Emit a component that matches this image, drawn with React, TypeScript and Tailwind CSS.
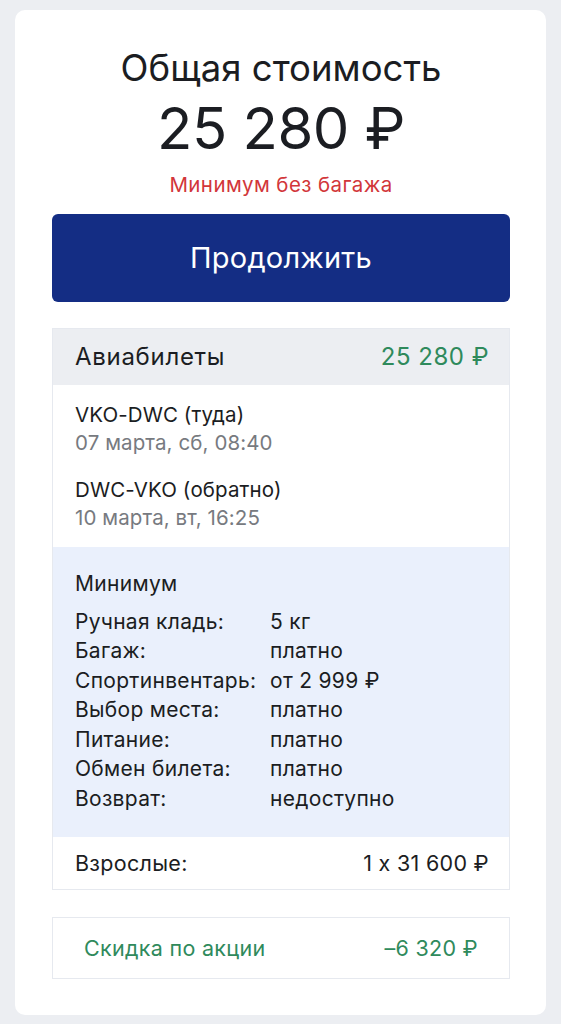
export default function App() {
  const fareRows: [string, string][] = [
    ["Ручная кладь:", "5 кг"],
    ["Багаж:", "платно"],
    ["Спортинвентарь:", "от 2 999 ₽"],
    ["Выбор места:", "платно"],
    ["Питание:", "платно"],
    ["Обмен билета:", "платно"],
    ["Возврат:", "недоступно"],
  ];

  return (
    <div className="min-h-screen bg-[#eceef2] px-[15px] pt-[10px] pb-[10px] font-['Inter',sans-serif] text-[#1b1d22]">
      <div className="rounded-[10px] bg-white pl-[37px] pr-[36px] pt-[35px] pb-[36px]">
        <div className="flex flex-col items-center">
          <h1 className="text-[36.5px] leading-[46px] font-normal">Общая стоимость</h1>
          <p className="mt-[4px] text-[58px] leading-[66px] font-normal tracking-[-0.5px]">25 280 ₽</p>
          <p className="mt-[12px] text-[20.5px] leading-[24px] tracking-[0.4px] text-[#d2363a]">Минимум без багажа</p>
        </div>

        <button className="mt-[17px] flex h-[88px] w-full items-center justify-center rounded-[6px] bg-[#142d84] text-[29px] tracking-[0.2px] text-white">
          Продолжить
        </button>

        <div className="mt-[26px] border border-[#e6e9ef] tracking-[0.3px]">
          <div className="flex h-[56px] items-center justify-between bg-[#eceef2] pl-[22px] pr-[20px] text-[24px] tracking-[0.7px]">
            <span>Авиабилеты</span>
            <span className="tracking-[0.5px] text-[#2f8a5c]">25 280 ₽</span>
          </div>

          <div className="flex flex-col gap-[19px] px-[22px] pt-[16px] pb-[15px] text-[20.5px] leading-[28px] tracking-[0.1px]">
            <div>
              <p>VKO-DWC (туда)</p>
              <p className="text-[#777a80]">07 марта, сб, 08:40</p>
            </div>
            <div>
              <p>DWC-VKO (обратно)</p>
              <p className="text-[#777a80]">10 марта, вт, 16:25</p>
            </div>
          </div>

          <div className="bg-[#eaf0fc] px-[22px] pt-[22px] pb-[24px] text-[21px] leading-[29.5px]">
            <p className="mb-[8px]">Минимум</p>
            {fareRows.map(([label, value]) => (
              <div key={label} className="grid grid-cols-[195px_1fr]">
                <span>{label}</span>
                <span>{value}</span>
              </div>
            ))}
          </div>

          <div className="flex h-[52px] items-center justify-between pl-[22px] pr-[20px] text-[21.5px]">
            <span>Взрослые:</span>
            <span className="[font-feature-settings:'calt'_0]">1 x 31 600 ₽</span>
          </div>
        </div>

        <div className="mt-[27px] flex h-[62px] items-center justify-between border border-[#e6e9ef] pl-[31px] pr-[31px] text-[21.5px] tracking-[0.3px] text-[#2f8a5c]">
          <span>Скидка по акции</span>
          <span>–6 320 ₽</span>
        </div>
      </div>
    </div>
  );
}
